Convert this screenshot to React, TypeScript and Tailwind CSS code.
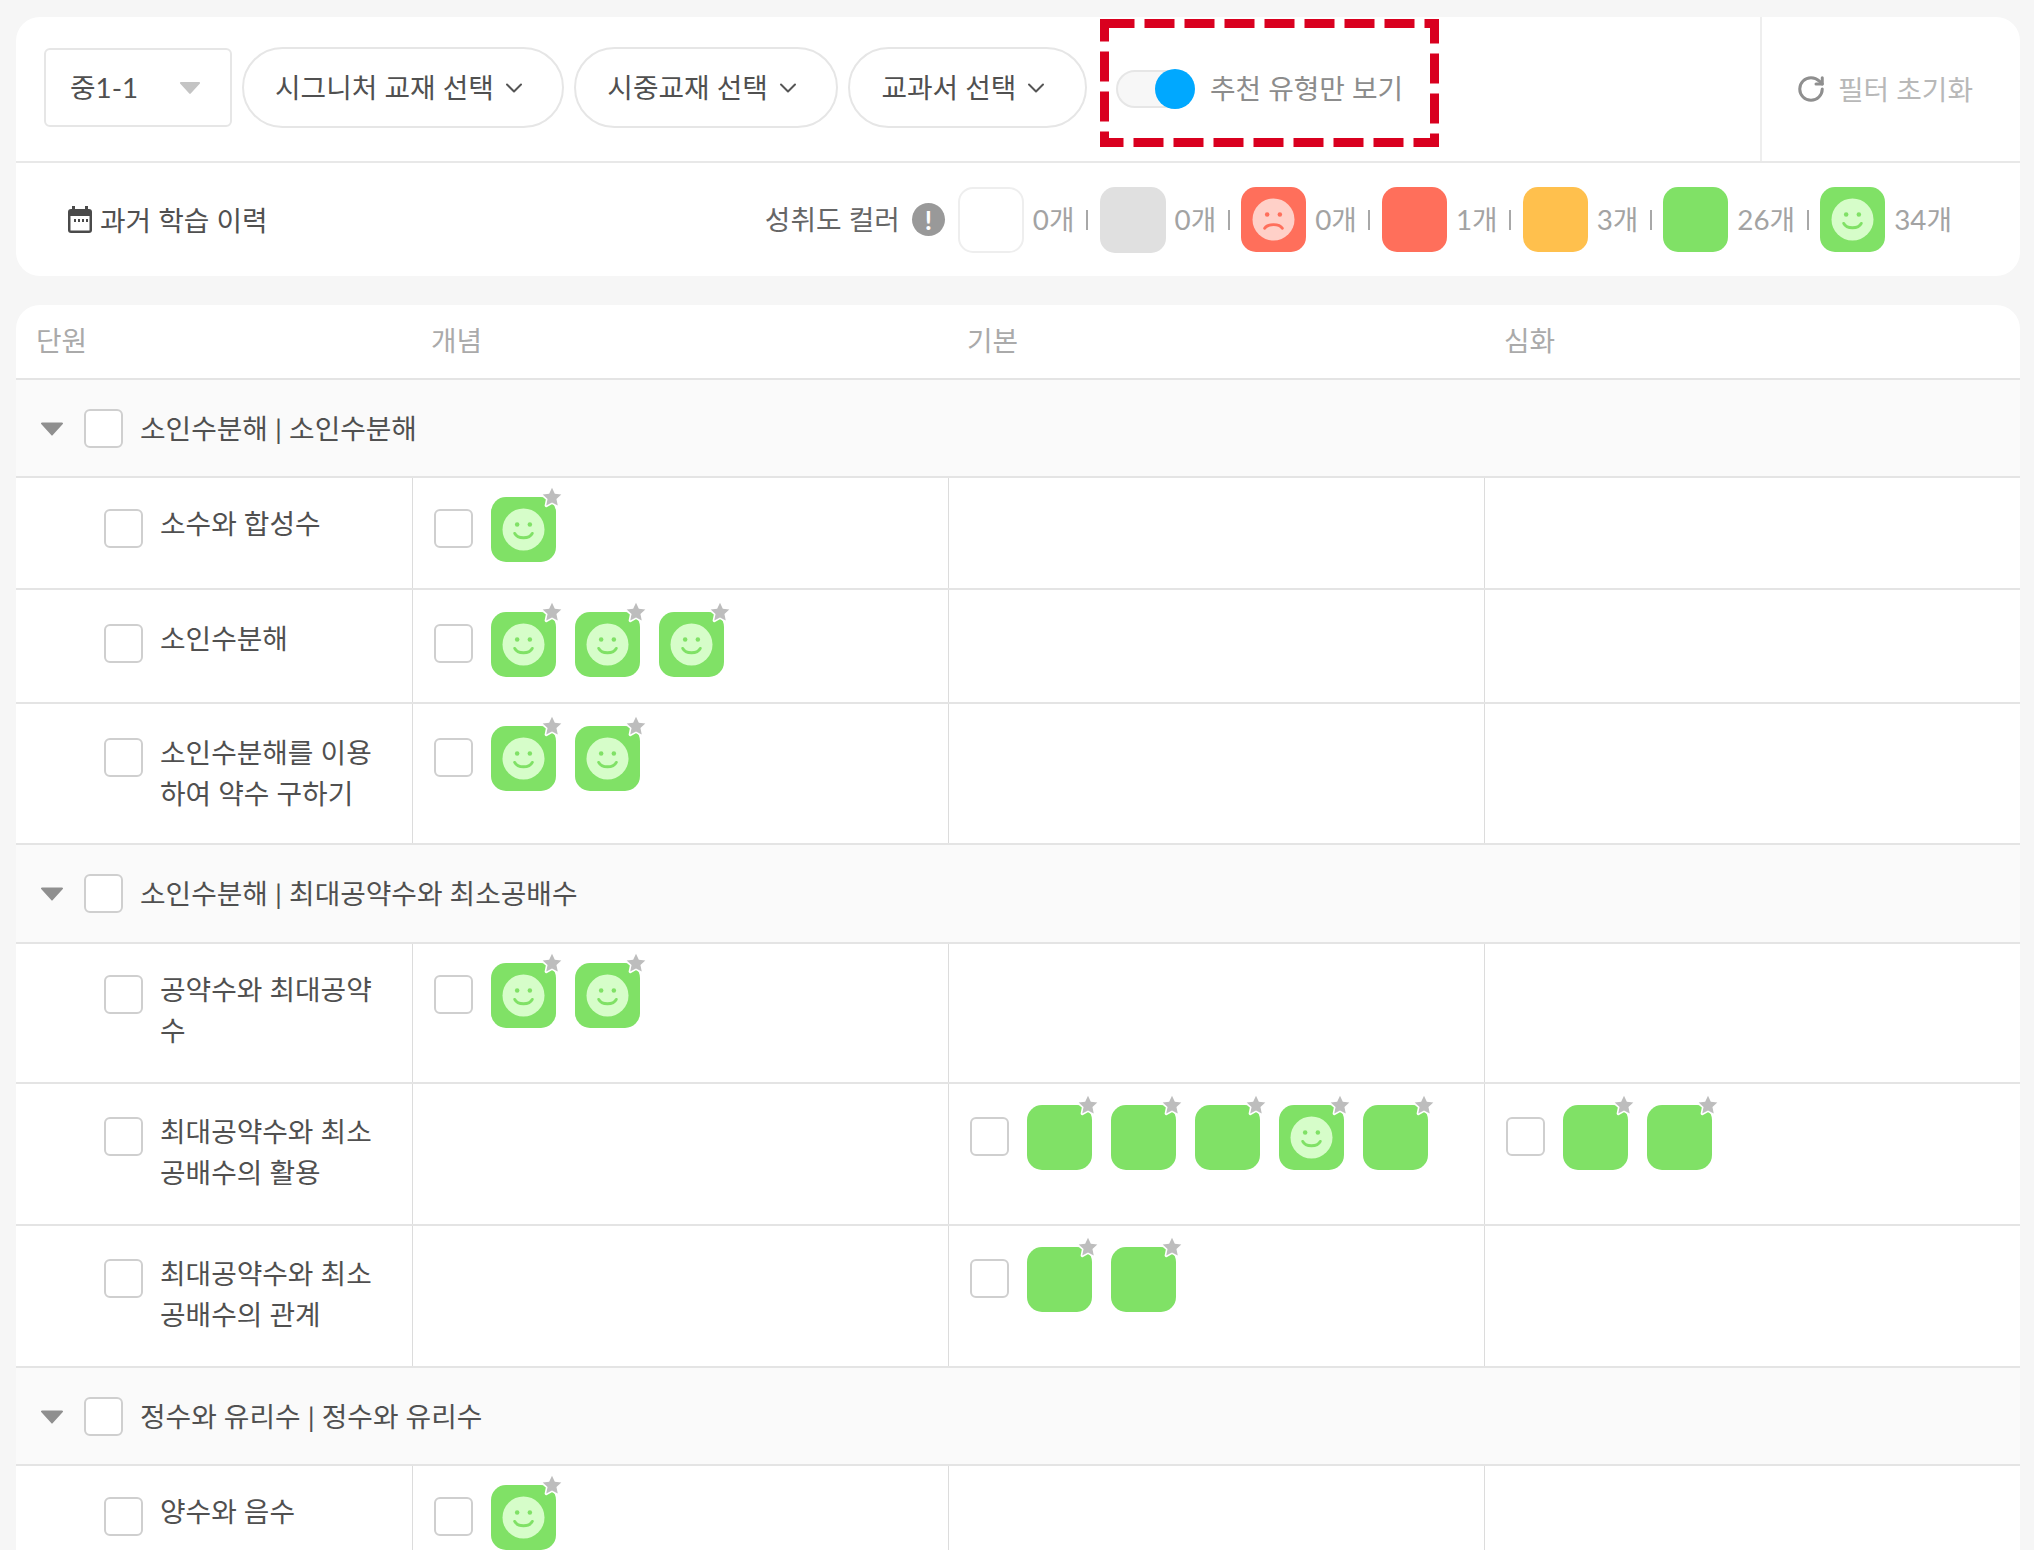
import React from 'react';
import { ChevronDown, RotateCw } from 'lucide-react';

type Tile = 'smile' | 'plain';

interface RowData {
  label: string;
  box: string;
  pad: string;
  cells: Tile[][];
}

interface Section {
  title: string;
  box: string;
  rows: RowData[];
}

const sections: Section[] = [
  {
    title: '소인수분해 | 소인수분해',
    box: 'h-[98px]',
    rows: [
      { label: '소수와 합성수', box: 'h-[112px]', pad: 'pt-[20px]', cells: [['smile'], [], []] },
      { label: '소인수분해', box: 'h-[114px]', pad: 'pt-[23px]', cells: [['smile', 'smile', 'smile'], [], []] },
      { label: '소인수분해를 이용하여 약수 구하기', box: 'h-[141px]', pad: 'pt-[23px]', cells: [['smile', 'smile'], [], []] },
    ],
  },
  {
    title: '소인수분해 | 최대공약수와 최소공배수',
    box: 'h-[99px]',
    rows: [
      { label: '공약수와 최대공약수', box: 'h-[140px]', pad: 'pt-[20px]', cells: [['smile', 'smile'], [], []] },
      {
        label: '최대공약수와 최소공배수의 활용',
        box: 'h-[142px]',
        pad: 'pt-[22px]',
        cells: [[], ['plain', 'plain', 'plain', 'smile', 'plain'], ['plain', 'plain']],
      },
      { label: '최대공약수와 최소공배수의 관계', box: 'h-[142px]', pad: 'pt-[22px]', cells: [[], ['plain', 'plain'], []] },
    ],
  },
  {
    title: '정수와 유리수 | 정수와 유리수',
    box: 'h-[98px]',
    rows: [{ label: '양수와 음수', box: 'h-[113px]', pad: 'pt-[20px]', cells: [['smile'], [], []] }],
  },
];

function Face({ sad, fg, bg }: { sad?: boolean; fg: string; bg: string }) {
  return (
    <svg viewBox="0 0 44 44" className="w-[43px] h-[43px]">
      <circle cx="22" cy="22" r="21.5" fill={bg} />
      <circle cx="15.5" cy="17" r="2.3" fill={fg} />
      <circle cx="28.5" cy="17" r="2.3" fill={fg} />
      {sad ? (
        <path d="M13 31c3-5 15-5 18 0" fill="none" stroke={fg} strokeWidth="3" strokeLinecap="round" />
      ) : (
        <path d="M13 26c3 6 15 6 18 0" fill="none" stroke={fg} strokeWidth="3" strokeLinecap="round" />
      )}
    </svg>
  );
}

function Checkbox() {
  return <div className="w-[39px] h-[39px] shrink-0 rounded-[6px] border-2 border-[#cfcfcf] bg-white" />;
}

function Triangle({ className }: { className: string }) {
  return (
    <svg viewBox="0 0 24 15" className={className}>
      <path d="M2 1.5h20a1 1 0 0 1 .8 1.6L12.8 14a1 1 0 0 1-1.6 0L1.2 3.1A1 1 0 0 1 2 1.5z" fill="currentColor" />
    </svg>
  );
}

function TileBox({ kind }: { kind: Tile }) {
  return (
    <div className="relative w-[65px] h-[65px] shrink-0 rounded-[15px] bg-[#80e166] flex items-center justify-center">
      {kind === 'smile' && <Face fg="#80e166" bg="#d6fdc9" />}
      {/* star badge on the corner, white stroke makes the notch */}
      <svg viewBox="0 0 24 24" className="absolute -top-[13px] -right-[9px] w-[26px] h-[26px]">
        <path
          d="M12 3.5l2.6 5.6 6 .7-4.5 4.1 1.2 6L12 17l-5.3 2.9 1.2-6-4.5-4.1 6-.7z"
          fill="#bdbdbd"
          stroke="#ffffff"
          strokeWidth="3"
          strokeLinejoin="round"
          paintOrder="stroke"
        />
      </svg>
    </div>
  );
}

function LegendItem({ swatch, count, last }: { swatch: React.ReactNode; count: string; last?: boolean }) {
  return (
    <div className="flex items-center">
      {swatch}
      <span className="ml-[9px] text-[#a3a3a3]">{count}</span>
      {!last && <span className="mx-[11.5px] w-[2px] h-[20px] bg-[#a8a8a8]" />}
    </div>
  );
}

function Pill({ label }: { label: string }) {
  return (
    <button className="h-[81px] pl-[31px] pr-[34.5px] rounded-full border-2 border-[#e6e6e6] bg-white flex items-center gap-[6px] text-[#505050] shrink-0">
      <span>{label}</span>
      <ChevronDown className="w-[28px] h-[28px] text-[#555555]" strokeWidth={1.7} />
    </button>
  );
}

export default function App() {
  return (
    <div className="h-[1550px] w-[2034px] overflow-hidden bg-[#f6f6f6] pt-[17px] pl-[16px] pr-[14px] text-[27.8px] leading-[41px] text-[#505050] font-['Lato','Noto_Sans_CJK_KR',sans-serif]">
      {/* ── filter card ── */}
      <div className="bg-white rounded-[24px] h-[259px]">
        <div className="h-[146px] border-b-2 border-[#e8e8e8] flex items-center">
          <div className="flex-1 flex items-center pl-[28px] pb-[3px]">
            <div className="w-[188px] h-[79px] rounded-[6px] border-2 border-[#e6e6e6] flex items-center justify-between pl-[24px] pr-[29px] shrink-0">
              <span>중1-1</span>
              <Triangle className="w-[22px] h-[15px] text-[#c4c4c4]" />
            </div>
            <div className="flex items-center gap-[10px] ml-[10px]">
              <Pill label="시그니처 교재 선택" />
              <Pill label="시중교재 선택" />
              <Pill label="교과서 선택" />
            </div>
            <div className="relative w-[339px] h-[128px] ml-[13px] -mt-[9px] flex items-center pl-[16px] pt-[11px] shrink-0">
              {/* red dashed annotation over the toggle */}
              <svg className="absolute inset-0 w-full h-full" viewBox="0 0 339 128">
                <rect x="4.5" y="4.5" width="330" height="119" fill="none" stroke="#d9001f" strokeWidth="9" strokeDasharray="30 10" />
              </svg>
              <div className="relative w-[79px] h-[40px] shrink-0">
                <div className="absolute left-0 right-[8px] top-px bottom-px rounded-full bg-[#f7f7f7] border-2 border-[#e6e6e6]" />
                <div className="absolute right-0 top-0 w-[40px] h-[40px] rounded-full bg-[#00a8ff]" />
              </div>
              <span className="ml-[15px] text-[#8c8c8c] whitespace-nowrap">추천 유형만 보기</span>
            </div>
          </div>
          <div className="w-[260px] h-full border-l-2 border-[#eeeeee] flex items-center pl-[34px] gap-[12px] text-[#b8b8b8] shrink-0">
            <RotateCw className="w-[30px] h-[30px] text-[#8f8f8f]" strokeWidth={2.4} />
            <span>필터 초기화</span>
          </div>
        </div>

        <div className="h-[113px] flex items-center justify-between pl-[51px] pr-[68px]">
          <div className="flex items-center gap-[7px] pt-px">
            <svg viewBox="0 0 26 28" className="w-[26px] h-[28px]">
              <rect x="1" y="3" width="24" height="24" rx="3" fill="#4a4a4a" />
              <rect x="5" y="0" width="3" height="6" fill="#4a4a4a" />
              <rect x="18" y="0" width="3" height="6" fill="#4a4a4a" />
              <rect x="3.5" y="10" width="19" height="14.5" fill="#ffffff" />
              <path d="M7 13h2v3H7zM11 13h2v3h-2zM15 13h2v3h-2zM19 13h2v3h-2z" fill="#4a4a4a" />
            </svg>
            <span>과거 학습 이력</span>
          </div>
          <div className="flex items-center">
            <span className="text-[#666666]">성취도 컬러</span>
            <div className="ml-[12px] mr-[13px] w-[33px] h-[33px] rounded-full bg-[#999999] flex items-center justify-center text-white font-bold text-[26px] leading-none">
              !
            </div>
            <LegendItem count="0개" swatch={<div className="w-[66px] h-[66px] rounded-[15px] border-2 border-[#eeeeee] bg-white" />} />
            <LegendItem count="0개" swatch={<div className="w-[66px] h-[66px] rounded-[15px] bg-[#e0e0e0]" />} />
            <LegendItem
              count="0개"
              swatch={
                <div className="w-[65px] h-[65px] rounded-[15px] bg-[#ff6f5b] flex items-center justify-center">
                  <Face sad fg="#ff6f5b" bg="#ffd0c8" />
                </div>
              }
            />
            <LegendItem count="1개" swatch={<div className="w-[65px] h-[65px] rounded-[15px] bg-[#ff6f5b]" />} />
            <LegendItem count="3개" swatch={<div className="w-[65px] h-[65px] rounded-[15px] bg-[#ffc04d]" />} />
            <LegendItem count="26개" swatch={<div className="w-[65px] h-[65px] rounded-[15px] bg-[#80e166]" />} />
            <LegendItem
              last
              count="34개"
              swatch={
                <div className="w-[65px] h-[65px] rounded-[15px] bg-[#80e166] flex items-center justify-center">
                  <Face fg="#80e166" bg="#d6fdc9" />
                </div>
              }
            />
          </div>
        </div>
      </div>

      {/* ── unit table ── */}
      <div className="mt-[29px] bg-white rounded-t-[24px]">
        <div className="h-[75px] pb-[2px] grid grid-cols-[397px_536px_536px_1fr] items-center border-b-2 border-[#e4e4e4] text-[#aaaaaa]">
          <div className="pl-[20px]">단원</div>
          <div className="pl-[18px]">개념</div>
          <div className="pl-[18px]">기본</div>
          <div className="pl-[19px]">심화</div>
        </div>

        {sections.map((section) => (
          <div key={section.title}>
            <div className={`${section.box} bg-[#fafafa] border-b-2 border-[#e4e4e4] flex items-center pl-[24px]`}>
              <Triangle className="w-[24px] h-[15px] text-[#8f8f8f]" />
              <div className="ml-[20px] w-[39px] h-[39px] rounded-[6px] border-2 border-[#cfcfcf] bg-white" />
              <span className="ml-[17px]">{section.title}</span>
            </div>
            {section.rows.map((row) => (
              <div key={row.label} className={`${row.box} grid grid-cols-[397px_536px_536px_1fr] border-b-2 border-[#e4e4e4]`}>
                <div className={`${row.pad} border-r border-[#dcdcdc] flex items-start pl-[88px]`}>
                  <div className="mt-[11px]">
                    <Checkbox />
                  </div>
                  <div className="ml-[17px] mt-[5px] w-[226px] break-all">{row.label}</div>
                </div>
                {row.cells.map((tiles, i) => (
                  <div key={i} className={`${row.pad} flex items-start pl-[21px] ${i < 2 ? 'border-r border-[#dcdcdc]' : ''}`}>
                    {tiles.length > 0 && (
                      <>
                        <div className="mt-[11px]">
                          <Checkbox />
                        </div>
                        <div className="ml-[18px] -mt-px flex gap-[19px]">
                          {tiles.map((t, j) => (
                            <TileBox key={j} kind={t} />
                          ))}
                        </div>
                      </>
                    )}
                  </div>
                ))}
              </div>
            ))}
          </div>
        ))}
      </div>
    </div>
  );
}
